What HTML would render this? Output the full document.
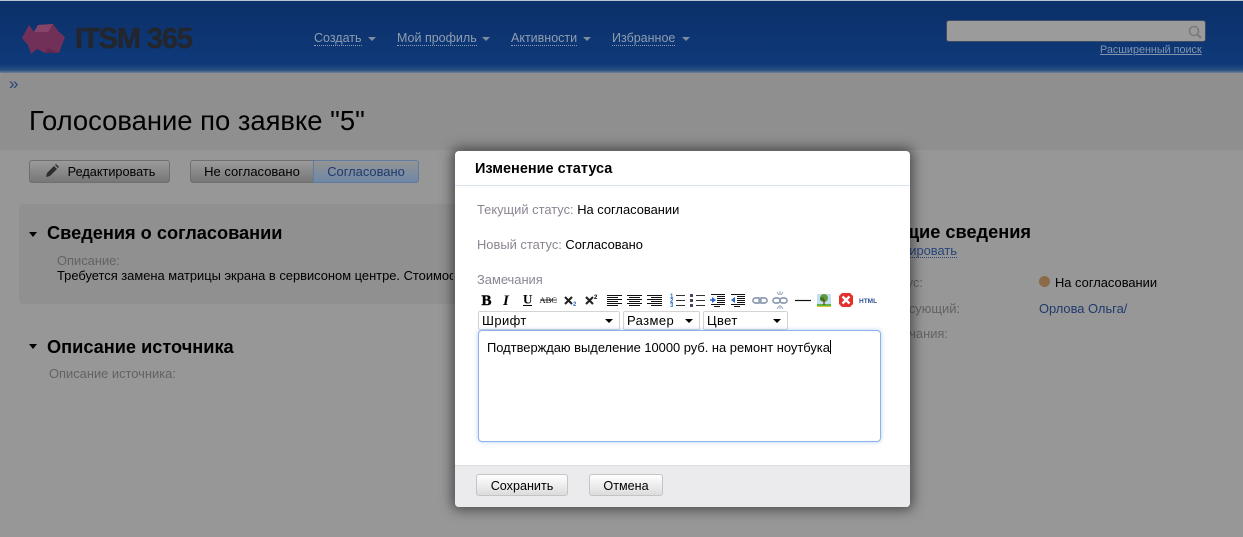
<!DOCTYPE html>
<html lang="ru"><head><meta charset="utf-8"><title>ITSM 365</title>
<style>
html,body{margin:0;padding:0;width:1243px;height:537px;overflow:hidden;background:#979797;font-family:"Liberation Sans",Arial,sans-serif;font-size:12.9px;color:#000}
.a{position:absolute;white-space:nowrap;line-height:14px}
#hdr{position:absolute;left:0;top:0;width:1243px;height:73px;background:linear-gradient(#0c3069 0,#0d3470 40%,#0e397a 88%,#2a4f80 96%,#6f8197 100%);border-top:1px solid #b9c4d2;box-sizing:border-box}
#band{position:absolute;left:0;top:73px;width:1243px;height:77px;background:#8f8f8f;border-radius:4px 0 0 0}
.nav{color:#8f9db0;font-size:12.5px;border-bottom:1px dotted #8f9db0;line-height:13px}
.tri{position:absolute;width:0;height:0;border-left:4px solid transparent;border-right:4px solid transparent;border-top:4px solid #7f8da2}
.btn{position:absolute;box-sizing:border-box;height:23px;border:1px solid #6f6f6f;border-radius:3px;background:linear-gradient(#9b9b9b,#777);line-height:22px;text-align:center;font-size:12.7px;color:#000}
.sec{position:absolute;font-weight:bold;font-size:18.2px;line-height:20px;color:#000;white-space:nowrap}
.arr{position:absolute;width:0;height:0;border-left:4.5px solid transparent;border-right:4.5px solid transparent;border-top:5px solid #000}
.g{color:#636363}
#dlg{position:absolute;left:455px;top:151px;width:455px;height:356px;background:#fff;border-radius:4px;box-shadow:0 0 12px 3px rgba(0,0,0,.5);overflow:hidden}
.lbl{color:#8c8593}
.sel{position:absolute;top:160px;height:19px;box-sizing:border-box;border:1px solid #d3d3d3;border-radius:2px;background:#fff;font-size:13px;line-height:17px;padding-left:3px;letter-spacing:.4px}
.sel i{position:absolute;right:6px;top:7px;width:0;height:0;border-left:4px solid transparent;border-right:4px solid transparent;border-top:4px solid #000}
.fb{position:absolute;top:323px;height:22px;box-sizing:border-box;border:1px solid #c4c4c4;border-radius:3px;background:linear-gradient(#fff,#dcdcdc);text-align:center;font-size:12.6px;line-height:23px}
</style></head><body>
<div id="hdr"></div>
<svg class="a" style="left:22px;top:23px" width="44" height="32" viewBox="0 0 44 32"><polygon points="0,15 7,2 12,9 16,2 31,1 37,9 43,14 37,30 23,30 15,26 9,31 6,22" fill="#713058"/><polygon points="16,2 31,1 26,9 12,9" fill="#864468"/><polygon points="23,30 37,30 26,25" fill="#622850"/></svg>
<div class="a" style="left:75px;top:22px;font-size:29px;line-height:34px;font-weight:bold;color:#23262c;letter-spacing:-1.1px;-webkit-text-stroke:.4px #23262c">ITSM 365</div>
<div class="a nav" style="left:314px;top:32px">Создать</div><div class="tri" style="left:368px;top:37px"></div>
<div class="a nav" style="left:397px;top:32px">Мой профиль</div><div class="tri" style="left:482px;top:37px"></div>
<div class="a nav" style="left:511px;top:32px">Активности</div><div class="tri" style="left:583px;top:37px"></div>
<div class="a nav" style="left:612px;top:32px">Избранное</div><div class="tri" style="left:682px;top:37px"></div>
<div style="position:absolute;left:946px;top:20px;width:260px;height:22px;box-sizing:border-box;background:#9b9b9b;border:1px solid #3c4c62;border-radius:3px"></div>
<svg class="a" style="left:1188px;top:25px" width="15" height="15" viewBox="0 0 15 15"><circle cx="6" cy="6" r="4.5" fill="none" stroke="#7b7b7b" stroke-width="1.6"/><path d="M9.5 9.5L13 13" stroke="#7b7b7b" stroke-width="2.2"/></svg>
<div class="a" style="left:1100px;top:43px;font-size:10.8px;color:#8394ac;text-decoration:underline">Расширенный поиск</div>
<div id="band"></div>
<div class="a" style="left:9px;top:76px;font-size:17px;color:#27457a;line-height:16px">»</div>
<div class="a" style="left:29px;top:105px;font-size:27.4px;line-height:32px;color:#000">Голосование по заявке "5"</div>

<div class="btn" style="left:29px;top:160px;width:141px;padding-left:24px">Редактировать</div>
<svg class="a" style="left:44px;top:163px" width="16" height="16" viewBox="0 0 16 16"><path d="M2 14l1-4 7-7 3 3-7 7z" fill="#2d2d2d"/><path d="M11 2l1-1 3 3-1 1z" fill="#2d2d2d"/></svg>
<div class="btn" style="left:190px;top:160px;width:124px;border-radius:3px 0 0 3px;font-size:13px">Не согласовано</div>
<div class="btn" style="left:313px;top:160px;width:106px;border-radius:0 3px 3px 0;background:linear-gradient(#949494,#6f88a6);border-color:#5f7c9e;color:#1f3a6c;font-size:12.9px">Согласовано</div>

<div style="position:absolute;left:19px;top:204px;width:440px;height:100px;background:#909090;border-radius:4px 0 0 4px"></div>
<div class="arr" style="left:29px;top:232px"></div>
<div class="sec" style="left:47px;top:223px">Сведения о согласовании</div>
<div class="a g" style="left:57px;top:254px">Описание:</div>
<div class="a" style="left:57px;top:269px;width:396px;overflow:hidden">Требуется замена матрицы экрана в сервисоном центре. Стоимость</div>
<div class="arr" style="left:29px;top:344px"></div>
<div class="sec" style="left:47px;top:337px">Описание источника</div>
<div class="a g" style="left:49px;top:367px">Описание источника:</div>

<div class="sec" style="left:880px;top:222px;width:151px;text-align:right">щие сведения</div>
<div class="a" style="left:880px;top:244px;width:77px;text-align:right;color:#27457a;border-bottom:1px dotted #27457a;line-height:13px">тировать</div>
<div class="a g" style="left:880px;top:276px;width:43px;text-align:right">ус:</div>
<div class="a g" style="left:880px;top:302px;width:80px;text-align:right">сующий:</div>
<div class="a g" style="left:880px;top:327px;width:68px;text-align:right">чания:</div>
<div style="position:absolute;left:1039px;top:276px;width:11px;height:11px;border-radius:50%;background:#8a6a48"></div>
<div class="a" style="left:1055px;top:276px">На согласовании</div>
<div class="a" style="left:1039px;top:302px;color:#1f3a6c">Орлова Ольга/</div>

<div id="dlg">
 <div class="a" style="left:20px;top:10px;font-size:14.5px;font-weight:bold;line-height:16px">Изменение статуса</div>
 <div style="position:absolute;left:0;top:34px;width:455px;height:1px;background:#dbe3ee"></div>
 <div class="a" style="left:22px;top:52px"><span class="lbl">Текущий статус:</span> На согласовании</div>
 <div class="a" style="left:22px;top:87px"><span class="lbl">Новый статус:</span> Согласовано</div>
 <div class="a lbl" style="left:22px;top:122px">Замечания</div>

 <svg style="position:absolute;left:23px;top:140px" width="410" height="18" viewBox="0 0 410 18" font-family="Liberation Sans,sans-serif">
  <text x="3.500" y="14" font-family="Liberation Serif,serif" font-weight="bold" font-size="15" stroke="#000" stroke-width=".4">B</text>
  <text x="25" y="14" font-family="Liberation Serif,serif" font-weight="bold" font-style="italic" font-size="15">I</text>
  <text x="45" y="12.500" font-family="Liberation Serif,serif" font-weight="bold" font-size="13">U</text><path d="M45 14.500h9" stroke="#000"/>
  <text x="61.500" y="12" font-size="8.500" font-family="Liberation Serif,serif">ABC</text><path d="M62 9h17" stroke="#000" stroke-width=".8"/>
  <path d="M87 6l7 7M94 6l-7 7" stroke="#222" stroke-width="2.100"/><text x="95" y="15" font-size="6" font-weight="bold" fill="#2f66c8">2</text>
  <path d="M108 6l7 7M115 6l-7 7" stroke="#222" stroke-width="2.100"/><text x="116" y="8" font-size="6" font-weight="bold">2</text>
  <path d="M129 4.500h15M129 6.500h11M129 8.500h15M129 10.500h11M129 12.500h15M129 14.500h11" stroke="#111"/>
  <path d="M149 4.500h15M151 6.500h11M149 8.500h15M151 10.500h11M149 12.500h15M151 14.500h11" stroke="#111"/>
  <path d="M169 4.500h15M173 6.500h11M169 8.500h15M173 10.500h11M169 12.500h15M173 14.500h11" stroke="#111"/>
  <text x="192" y="7" font-size="6" font-weight="bold" fill="#2f66c8">1</text><text x="192" y="11.500" font-size="6" font-weight="bold" fill="#2f66c8">2</text><text x="192" y="16" font-size="6" font-weight="bold" fill="#2f66c8">3</text>
  <path d="M198 4.500h9M198 9.500h9M198 14.500h9" stroke="#333"/>
  <path d="M212 3h3v3h-3zM212 8h3v3h-3zM212 13h3v3h-3z" fill="#446"/><path d="M218 4.500h9M218 9.500h9M218 14.500h9" stroke="#333"/>
  <path d="M233 3.500h14M239 5.500h8M239 7.500h8M239 9.500h8M239 11.500h8M233 13.500h14M236 15.500h6" stroke="#111"/><path d="M234 6v6l4-3z" fill="#2f66c8"/><path d="M232 9h3" stroke="#2f66c8" stroke-width="1.500"/>
  <path d="M253 3.500h14M259 5.500h8M259 7.500h8M259 9.500h8M259 11.500h8M253 13.500h14M256 15.500h6" stroke="#111"/><path d="M257 6v6l-4-3z" fill="#2f66c8"/>
  <rect x="275" y="7" width="8" height="5" rx="2.500" fill="none" stroke="#8d9bb0" stroke-width="1.700"/><rect x="281" y="7" width="8" height="5" rx="2.500" fill="none" stroke="#8d9bb0" stroke-width="1.700"/>
  <rect x="295" y="7" width="7" height="5" rx="2.500" fill="none" stroke="#8d9bb0" stroke-width="1.700"/><rect x="302" y="7" width="7" height="5" rx="2.500" fill="none" stroke="#8d9bb0" stroke-width="1.700"/><path d="M299 1l2 3M302 0v4M305 1l-2 3M299 18l2-3M302 18v-4M305 18l-2-3" stroke="#9aa6b8"/>
  <path d="M317 9.500h16" stroke="#111" stroke-width="1.200"/>
  <rect x="339" y="3" width="14" height="13" fill="#c4dff0"/><path d="M339 13h14v3h-14z" fill="#5cb83e"/><circle cx="346" cy="7" r="4" fill="#5f9c3c"/><circle cx="344" cy="8" r="2" fill="#3f7a2a"/><path d="M346 8v6" stroke="#6a4322" stroke-width="1.300"/><path d="M339 15.500h14" stroke="#d8c62a"/>
  <polygon points="364,2 372,2 375,5 375,13 372,16 364,16 361,13 361,5" fill="#e63030"/><path d="M364.500 5.500l7 7M371.500 5.500l-7 7" stroke="#fff" stroke-width="2.400"/>
  <text x="381" y="12" font-size="6.500" font-weight="bold" fill="#2b4f95">HTML</text>
 </svg>

 <div class="sel" style="left:23px;width:142px">Шрифт<i></i></div>
 <div class="sel" style="left:168px;width:77px">Размер<i></i></div>
 <div class="sel" style="left:248px;width:85px">Цвет<i></i></div>

 <div style="position:absolute;left:23px;top:179px;width:403px;height:112px;box-sizing:border-box;border:1px solid #8eb4e6;border-radius:4px;box-shadow:0 0 4px rgba(110,160,230,.5);background:#fff"></div>
 <div class="a" style="left:32px;top:189px;font-size:12.9px">Подтверждаю выделение 10000 руб. на ремонт ноутбука<span style="display:inline-block;width:1px;height:14px;background:#000;vertical-align:-2px"></span></div>

 <div style="position:absolute;left:0;top:314px;width:455px;height:42px;background:#ebebed;border-top:1px solid #dcdcdc;box-sizing:border-box"></div>
 <div class="fb" style="left:21px;width:92px">Сохранить</div>
 <div class="fb" style="left:134px;width:74px">Отмена</div>
</div>
</body></html>
